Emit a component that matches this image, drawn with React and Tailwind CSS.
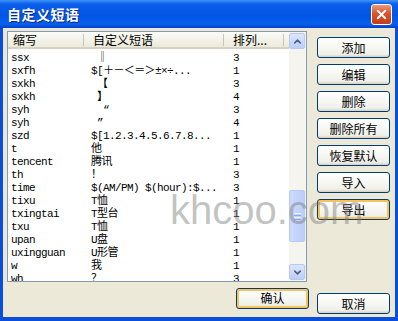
import { ChevronUp, ChevronDown, X } from "lucide-react";

const rows = [
  ["ssx", " ‖", "3"],
  ["sxfh", "$[＋－＜＝＞±×÷...", "1"],
  ["sxkh", " 【", "3"],
  ["sxkh", " 】", "4"],
  ["syh", "  “", "3"],
  ["syh", " ”", "4"],
  ["szd", "$[1.2.3.4.5.6.7.8...", "1"],
  ["t", "他", "1"],
  ["tencent", "腾讯", "1"],
  ["th", "！", "3"],
  ["time", "$(AM/PM) $(hour):$...", "3"],
  ["tixu", "T恤", "1"],
  ["txingtai", "T型台", "1"],
  ["txu", "T恤", "1"],
  ["upan", "U盘", "1"],
  ["uxingguan", "U形管", "1"],
  ["w", "我", "1"],
  ["wh", "？", "3"],
];

const sideButtons = ["添加", "编辑", "删除", "删除所有", "恢复默认", "导入", "导出"];

const XpButton = ({ label, focused }) => (
  <button
    className={`h-[21px] w-[73px] rounded-[3px] border border-[#003c74] bg-[linear-gradient(to_bottom,#ffffff,#f0f0ea_85%,#d6d0c5)] text-[12px] leading-none text-black ${
      focused ? "shadow-[inset_0_0_0_2px_#f9c35a]" : ""
    }`}
  >
    {label}
  </button>
);

const App = () => {
  return (
    <div
      className="relative flex h-[321px] w-[398px] flex-col overflow-hidden bg-[#0a4fdc]"
      style={{ fontFamily: '"Noto Sans CJK SC", "Liberation Sans", sans-serif' }}
    >
      {/* title bar */}
      <div className="flex h-[28px] items-center justify-between bg-[linear-gradient(to_bottom,#3f95f8_0%,#0a5ee9_14%,#0055e5_55%,#0860ec_86%,#0041c8_100%)] pl-[7px] pr-[6px]">
        <span className="text-[14px] font-bold tracking-[0.5px] text-white [text-shadow:1px_1px_0_#0a2a80]">
          自定义短语
        </span>
        <div className="flex h-[21px] w-[21px] items-center justify-center rounded-[3px] border border-white bg-[linear-gradient(to_bottom,#e99a7e,#d9532d_45%,#c23c1a)]">
          <X size={15} strokeWidth={3} className="text-white" />
        </div>
      </div>

      {/* body */}
      <div className="mx-[3px] mb-[4px] flex flex-1 bg-[#ece9d8]">
        <div className="flex flex-1 flex-col pl-[4px] pt-[3px]">
          {/* list view */}
          <div className="flex h-[251px] w-[300px] border border-[#7f9db9] bg-white">
            <div className="flex flex-1 flex-col overflow-hidden">
              <div className="flex h-[17px] shrink-0 items-center border-b-[2px] border-[#d6d2c2] bg-[linear-gradient(to_bottom,#fbfbf9,#ebeadb)] text-[12px] leading-none text-black">
                <div className="w-[76px] border-r border-[#c7c5b2] pl-[5px]">缩写</div>
                <div className="w-[140px] border-r border-[#c7c5b2] pl-[9px]">自定义短语</div>
                <div className="w-[60px] border-r border-[#c7c5b2] pl-[9px]">排列...</div>
              </div>
              <div
                className="pt-[3px] text-[11px] leading-[13px] tracking-[-0.6px] text-black"
                style={{ fontFamily: '"Liberation Mono", "Noto Sans CJK SC", monospace' }}
              >
                {rows.map(([abbr, phrase, order], i) => (
                  <div key={i} className="flex h-[13px] whitespace-pre">
                    <div className="w-[76px] pl-[3px]">{abbr}</div>
                    <div className="w-[140px] pl-[7px]">{phrase}</div>
                    <div className="w-[60px] pl-[9px]">{order}</div>
                  </div>
                ))}
              </div>
            </div>
            {/* scrollbar */}
            <div className="relative flex w-[17px] flex-col justify-between bg-[#f5f4ee] pt-[1px]">
              <div className="flex h-[16px] w-[16px] items-center justify-center rounded-[2px] border border-[#b8c9f0] bg-[linear-gradient(to_bottom,#dce6fd,#bccdf8)]">
                <ChevronUp size={11} strokeWidth={3.5} className="text-[#4d6185]" />
              </div>
              <div className="absolute left-0 top-[158px] flex h-[52px] w-[16px] items-center justify-center rounded-[2px] border border-[#b8c9f0] bg-[linear-gradient(to_right,#cbdafc,#bccdf8)]">
                <div className="flex flex-col gap-[1px]">
                  <div className="h-[1px] w-[7px] bg-[#eef3fe]" />
                  <div className="h-[1px] w-[7px] bg-[#8aa6e8]" />
                  <div className="h-[1px] w-[7px] bg-[#eef3fe]" />
                  <div className="h-[1px] w-[7px] bg-[#8aa6e8]" />
                </div>
              </div>
              <div className="mb-[1px] flex h-[16px] w-[16px] items-center justify-center rounded-[2px] border border-[#b8c9f0] bg-[linear-gradient(to_bottom,#dce6fd,#bccdf8)]">
                <ChevronDown size={11} strokeWidth={3.5} className="text-[#4d6185]" />
              </div>
            </div>
          </div>
          <div className="flex flex-1 items-center justify-end pr-[1px] pb-[3px]">
            <XpButton label="确认" focused />
          </div>
        </div>

        {/* side buttons */}
        <div className="flex w-[85px] flex-col pl-[7px] pt-[9px]">
          <div className="flex flex-col gap-[6px]">
            {sideButtons.map((b) => (
              <XpButton key={b} label={b} focused={b === "导出"} />
            ))}
          </div>
          <div className="mt-auto pb-[3px]">
            <XpButton label="取消" />
          </div>
        </div>
      </div>

      {/* watermark */}
      <div
        className="pointer-events-none absolute left-[170px] top-[190px] text-[40px] leading-none text-[rgba(120,120,120,0.45)]"
        style={{ fontFamily: '"Liberation Sans", Arial, sans-serif' }}
      >
        khcoo.com
      </div>
    </div>
  );
};

export default App;
